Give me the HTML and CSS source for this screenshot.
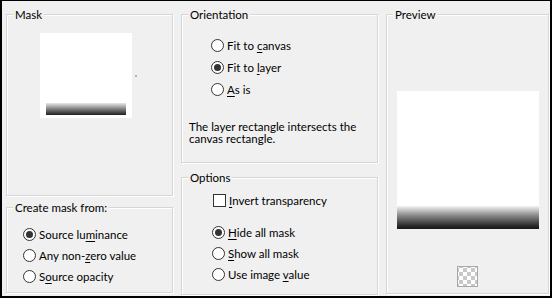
FILE: index.html
```html
<!DOCTYPE html>
<html lang="en">
<head>
    <meta charset="UTF-8">
    <title>Mask</title>
    <link rel="stylesheet" href="styles.css">
</head>
<body>
    <div class="dialog">
        <div class="column col-mask">
            <fieldset class="group group-mask">
                <legend>Mask</legend>
                <div class="thumb-wrap">
                    <div class="thumb"><div class="thumb-bar"></div></div>
                    <span class="thumb-dot"></span>
                </div>
            </fieldset>
            <fieldset class="group group-source">
                <legend>Create mask from:</legend>
                <div class="choices">
                    <label class="choice"><span class="radio checked"></span><span>Source lu<u>m</u>inance</span></label>
                    <label class="choice"><span class="radio"></span><span>Any non-<u>z</u>ero value</span></label>
                    <label class="choice"><span class="radio"></span><span>S<u>o</u>urce opacity</span></label>
                </div>
            </fieldset>
        </div>

        <div class="column col-middle">
            <fieldset class="group group-orient">
                <legend>Orientation</legend>
                <div class="choices">
                    <label class="choice"><span class="radio"></span><span>Fit to <u>c</u>anvas</span></label>
                    <label class="choice"><span class="radio checked"></span><span>Fit to <u>l</u>ayer</span></label>
                    <label class="choice"><span class="radio"></span><span><u>A</u>s is</span></label>
                </div>
                <p class="note">The layer rectangle intersects the canvas rectangle.</p>
            </fieldset>
            <fieldset class="group group-options">
                <legend>Options</legend>
                <div class="choices">
                    <label class="choice"><span class="check"></span><span><u>I</u>nvert transparency</span></label>
                </div>
                <div class="choices choices-gap">
                    <label class="choice"><span class="radio checked"></span><span><u>H</u>ide all mask</span></label>
                    <label class="choice"><span class="radio"></span><span><u>S</u>how all mask</span></label>
                    <label class="choice"><span class="radio"></span><span>Use image <u>v</u>alue</span></label>
                </div>
            </fieldset>
        </div>

        <div class="column col-preview">
            <fieldset class="group group-preview">
                <legend>Preview</legend>
                <div class="preview"><div class="preview-bar"></div></div>
                <div class="checker"></div>
            </fieldset>
        </div>
    </div>
</body>
</html>
```

FILE: styles.css
```css
* {
    box-sizing: border-box;
}
body {
    margin: 0;
    font-family: Lato, "Noto Sans", sans-serif;
    font-size: 11.5px;
    color: #000;
}
.dialog {
    width: 552px;
    height: 298px;
    border: 2px solid #000;
    border-top-width: 1px;
    background-color: #f0f0f0;
    padding: 6px 1px 3px 4px;
    display: grid;
    grid-template-columns: 167px 197px 163px;
    column-gap: 8px;
}
.column {
    display: flex;
    flex-direction: column;
}
.group {
    margin: 0;
    padding: 0;
    min-width: 0;
    border: 1px solid #d6d6d6;
    box-shadow: inset 1px 1px 0 #fff, 1px 1px 0 #fff;
}
.group legend {
    margin-left: 6px;
    padding: 0 2px;
    line-height: 15px;
    background-color: #f0f0f0;
}
.group-mask {
    height: 189px;
}
.group-source {
    height: 93px;
    margin-top: 4px;
}
.group-orient {
    height: 156px;
}
.group-options {
    height: 125px;
    margin-top: 7px;
}
.group-preview {
    height: 287px;
}

/* radio and check rows */
.choices {
    display: flex;
    flex-direction: column;
}
.choice {
    display: flex;
    align-items: center;
    height: 21px;
    white-space: nowrap;
}
.radio {
    width: 13px;
    height: 13px;
    border: 1px solid #333;
    border-radius: 50%;
    background-color: #fff;
    margin-right: 3px;
    display: flex;
    align-items: center;
    justify-content: center;
    flex-shrink: 0;
}
.radio.checked::after {
    content: "";
    width: 7px;
    height: 7px;
    border-radius: 50%;
    background-color: #333;
}
.check {
    width: 13px;
    height: 13px;
    border: 1px solid #333;
    background-color: #fff;
    margin-right: 3px;
    flex-shrink: 0;
}
u {
    text-decoration-thickness: 1px;
    text-underline-offset: 2px;
}

.group-source .choices {
    padding: 9px 0 0 16px;
}
.group-orient .choices {
    padding: 12px 0 0 29px;
}
.group-orient .choice {
    height: 22px;
}
.note {
    margin: 21px 0 0 7px;
    line-height: 12px;
    width: 180px;
}
.group-options .choices {
    padding: 5px 0 0 31px;
}
.group-options .choices-gap {
    padding-top: 11px;
    padding-left: 30px;
}

/* mask thumbnail */
.thumb-wrap {
    position: relative;
    padding: 11px 0 0 33px;
}
.thumb {
    width: 92px;
    height: 85px;
    background-color: #fff;
    padding: 70px 6px 0 6px;
}
.thumb-bar {
    height: 12px;
    background: linear-gradient(#e8e8e8, #8a8a8a 45%, #1e1e1e);
}
.thumb-dot {
    position: absolute;
    left: 128px;
    top: 53px;
    width: 2px;
    height: 2px;
    background-color: #b0b0b0;
}

/* preview */
.group-preview {
    display: flex;
    flex-direction: column;
    align-items: center;
}
.preview {
    width: 142px;
    height: 138px;
    margin-top: 69px;
    background-color: #fff;
    padding-top: 115px;
}
.preview-bar {
    height: 23px;
    background: linear-gradient(#f4f4f4, #8c8c8c 40%, #222 90%, #1a1a1a);
}
.checker {
    width: 21px;
    height: 21px;
    margin-top: 37px;
    border: 1px solid #a8a8a8;
    background-color: #fff;
    background-image:
        linear-gradient(45deg, #c8c8c8 25%, transparent 25%, transparent 75%, #c8c8c8 75%),
        linear-gradient(45deg, #c8c8c8 25%, transparent 25%, transparent 75%, #c8c8c8 75%);
    background-size: 8px 8px;
    background-position: 1px 1px, 5px 5px;
}
```
